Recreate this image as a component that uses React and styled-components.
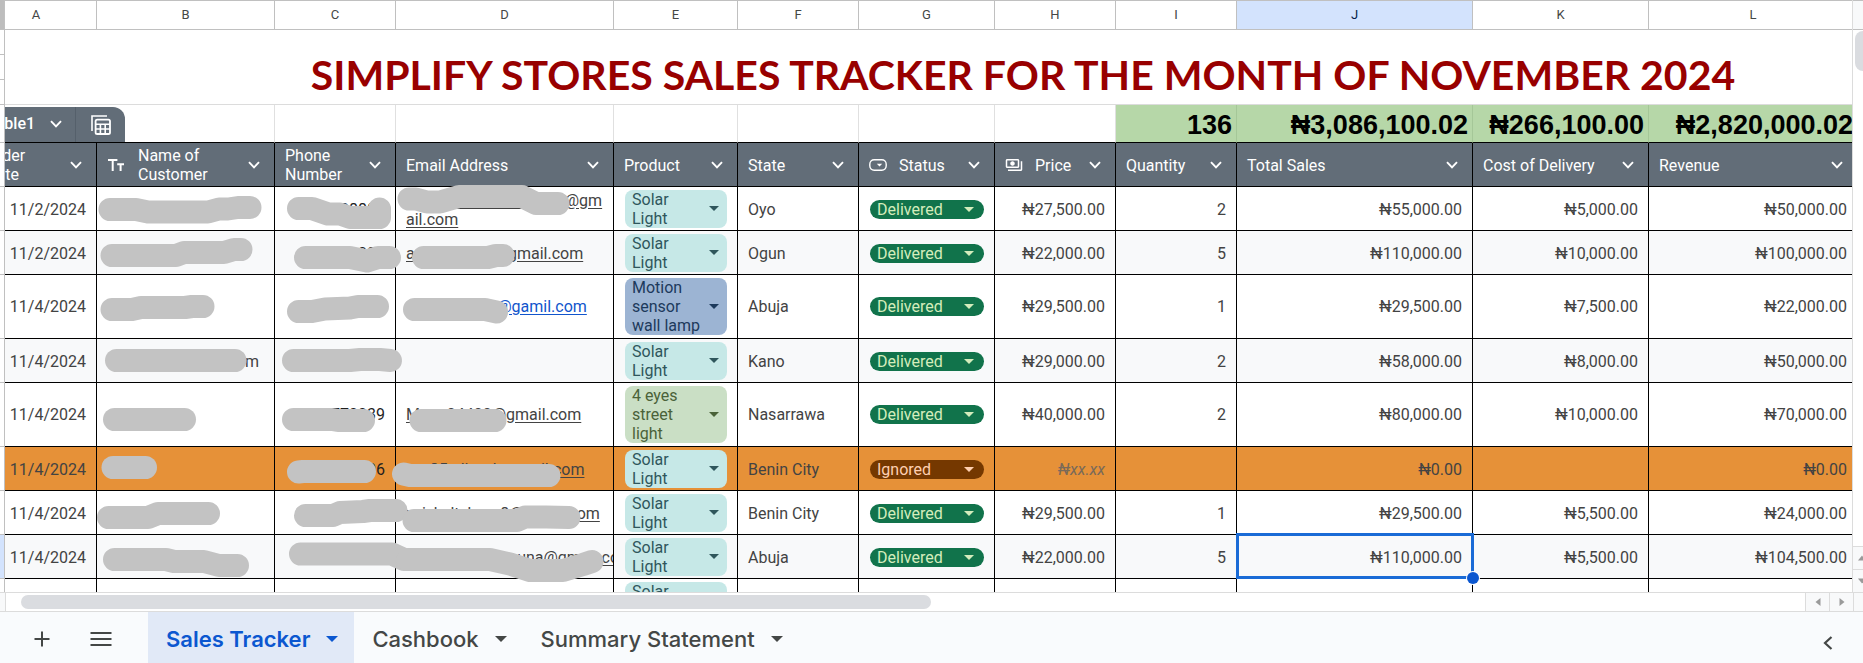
import React from 'react';
import styled, { createGlobalStyle, css } from 'styled-components';
import { MdOutlinePayments } from 'react-icons/md';

const GlobalStyle = createGlobalStyle`
  * {
    box-sizing: border-box;
  }

  body {
    margin: 0;
    background: #fff;
    color: #434343;
    font-family: Roboto, 'Liberation Sans', sans-serif;
    font-size: 16px;
    line-height: 19px;
  }

  button,
  select {
    margin: 0;
    padding: 0;
    border: 0;
    background: none;
    color: inherit;
    font: inherit;
    cursor: pointer;
  }
`;

const Page = styled.div`
  display: flex;
  flex-direction: column;
  height: 100vh;
  overflow: hidden;
`;

const Main = styled.main`
  position: relative;
  display: flex;
  flex: 1;
  min-height: 0;
  overflow: hidden;
`;

const RowStubs = styled.div`
  flex: none;
  width: 5px;
  border-right: 1px solid #c0c0c0;
`;

const Stub = styled.div`
  height: ${({ $height }) => $height}px;
  border-bottom: 1px solid #c0c0c0;
  background: ${({ $fill }) => $fill || '#fff'};
`;

const Sheet = styled.div`
  flex: 1;
  min-width: 0;
  overflow: hidden;
`;

/* scrolled 29px to the right, the last column runs on under the scroll bar */
const Table = styled.table`
  width: calc(100% + 35px);
  margin-left: -29px;
  border-collapse: separate;
  border-spacing: 0;
  table-layout: fixed;
`;

const Letter = styled.th`
  height: 30px;
  padding: 0 0 2px;
  border: solid #c0c0c0;
  border-width: 1px 1px 1px 0;
  background: ${({ $active }) => ($active ? '#d3e3fd' : '#fff')};
  color: ${({ $active }) => ($active ? '#041e49' : '#444746')};
  font-size: 13px;
  font-weight: 400;
`;

const TitleCell = styled.td`
  height: 75px;
  padding: 0 0 4px 212px;
  border-bottom: 1px solid #dcdcdc;
  color: #980000;
  font-family: Lato, 'Liberation Sans', sans-serif;
  font-size: 41px;
  font-weight: 700;
  line-height: 50px;
  text-align: center;
  vertical-align: bottom;
  white-space: nowrap;
`;

const TotalCell = styled.td`
  height: 38px;
  padding: ${({ $green }) => ($green ? '0 4px 2px 0' : '0')};
  border-right: 1px solid ${({ $green }) => ($green ? '#a5c798' : '#e0e0e0')};
  border-bottom: 1px solid #000;
  background: ${({ $green }) => ($green ? '#b6d7a8' : '#fff')};
  color: #000;
  font-family: 'Liberation Sans', Arial, sans-serif;
  font-size: 27px;
  font-weight: 700;
  line-height: 30px;
  text-align: right;
  vertical-align: bottom;
  white-space: nowrap;
`;

const TableTab = styled.div`
  display: flex;
  width: 149px;
  height: 35px;
  border-radius: 0 12px 0 0;
  background: #626d78;
  color: #fff;
  font-family: Roboto, sans-serif;
  font-size: 16px;
  font-weight: 500;
  line-height: 19px;
`;

const TableName = styled.button`
  display: flex;
  align-items: center;
  justify-content: space-between;
  width: 100px;
  padding: 0 13px 2px 11px;
  border-right: 1px solid #55606b;
`;

const TableCalc = styled.button`
  display: flex;
  flex: 1;
  align-items: center;
  justify-content: center;
`;

const HeadCell = styled.th`
  height: 44px;
  padding: 1px 14px 0 10px;
  border-right: 1px solid #000;
  border-bottom: 1px solid #000;
  background: #626d78;
  color: #fff;
  font-weight: 400;
  text-align: left;
`;

const HeadInner = styled.div`
  display: flex;
  align-items: center;
  gap: 12px;

  span {
    flex: 1;
  }

  svg {
    display: block;
    flex: none;
  }
`;

const Cell = styled.td`
  position: relative;
  padding: 2px 10px 0;
  border-right: 1px solid #000;
  border-bottom: 1px solid #000;
  text-align: ${({ $right }) => ($right ? 'right' : 'left')};
  white-space: nowrap;

  ${({ $ghost }) =>
    $ghost &&
    css`
      color: #7a6a58;
      font-style: italic;
    `}

  ${({ $selected }) =>
    $selected &&
    css`
      &::before {
        content: '';
        position: absolute;
        z-index: 1;
        inset: -2px -2px -1px -1px;
        border: 3px solid #1a6bd6;
      }

      &::after {
        content: '';
        position: absolute;
        z-index: 2;
        right: -7px;
        bottom: -6px;
        width: 12px;
        height: 12px;
        border-radius: 50%;
        background: #0b57d0;
        box-shadow: 0 0 0 1px #fff;
      }
    `}
`;

const ChipCell = styled(Cell)`
  padding-top: 0;
`;

const Row = styled.tr`
  height: ${({ $tall }) => ($tall ? 64 : 44)}px;
  background: ${({ $fill }) => $fill || '#fff'};

  ${({ $tall }) =>
    $tall &&
    css`
      ${Cell} {
        padding-top: 0;
      }
    `}
`;

const NameText = styled.span`
  display: block;
  padding-right: 5px;
  text-align: right;
`;

const Mail = styled.a`
  display: block;
  overflow: hidden;
  margin-right: -10px;
  padding-right: 10px;
  color: ${({ $blue }) => ($blue ? '#1155cc' : 'inherit')};
  text-decoration: underline;
  text-underline-offset: 2px;
  white-space: ${({ $wrap }) => ($wrap ? 'normal' : 'nowrap')};
  word-break: break-all;
`;

const Phone = styled.span`
  color: #1f1f1f;
`;

const tones = {
  solar: ['#c6e8e7', '#2f565c'],
  motion: ['#9cb4d3', '#1d3a5c'],
  street: ['#cadfc5', '#4a6239'],
  Delivered: ['#11734b', '#d4edbc'],
  Ignored: ['#753800', '#ffcfb0'],
};

const ProductChip = styled.button`
  display: flex;
  align-items: center;
  justify-content: space-between;
  width: 102px;
  margin-left: 1px;
  padding: 0 8px 0 7px;
  border-radius: 8px;
  background: ${({ $tone }) => tones[$tone][0]};
  color: ${({ $tone }) => tones[$tone][1]};
  text-align: left;
  white-space: normal;

  span {
    width: 72px;
  }
`;

const StatusChip = styled.label`
  display: grid;
  grid-template-columns: 1fr 20px;
  align-items: center;
  height: 19px;
  margin-left: 1px;
  border-radius: 10px;
  background: ${({ $tone }) => tones[$tone][0]};
  color: ${({ $tone }) => tones[$tone][1]};

  select {
    grid-area: 1 / 1 / 2 / 3;
    width: 100%;
    height: 19px;
    padding: 0 7px;
    appearance: none;
    outline-offset: 1px;
  }

  svg {
    grid-area: 1 / 2 / 2 / 3;
    pointer-events: none;
  }
`;

const Redactions = styled.svg`
  position: absolute;
  top: 0;
  left: 0;
  width: 620px;
  height: 600px;
  fill: none;
  stroke: #c3c3c3;
  stroke-width: 23;
  stroke-linecap: round;
  stroke-linejoin: round;
  pointer-events: none;
`;

const VerticalBar = styled.div`
  display: flex;
  flex: none;
  flex-direction: column;
  width: 11px;
  overflow: hidden;
  border-left: 1px solid #dcdcdc;
`;

const BarTop = styled.div`
  height: 30px;
  border: solid #c0c0c0;
  border-width: 1px 0;
  background: #f8f9fa;
`;

const VerticalThumb = styled.div`
  width: 16px;
  height: 40px;
  margin: 1px 0 auto 2px;
  border-radius: 8px;
  background: #dadce0;
`;

const ArrowButton = styled.button`
  display: flex;
  flex: none;
  align-items: center;
  justify-content: center;
  width: ${({ $wide }) => ($wide ? 24 : 18)}px;
  height: ${({ $wide }) => ($wide ? 18 : 23)}px;
  border: solid #dcdcdc;
  border-width: ${({ $wide }) => ($wide ? '0 0 0 1px' : '1px 0 0')};
  background: #f8f9fa;
`;

const HorizontalBar = styled.div`
  display: flex;
  flex: none;
  height: 20px;
  border: solid #dcdcdc;
  border-width: 1px 0;
`;

const BarCorner = styled.div`
  flex: none;
  width: ${({ $width }) => $width}px;
  border: solid #dcdcdc;
  border-width: ${({ $end }) => ($end ? '0 0 0 1px' : '0 1px 0 0')};
  background: #f8f9fa;
`;

const Track = styled.div`
  flex: 1;
  padding: 2px 0 2px 15px;
`;

const HorizontalThumb = styled.div`
  width: 51%;
  height: 14px;
  border-radius: 7px;
  background: #dadce0;
`;

const Footer = styled.footer`
  display: flex;
  flex: none;
  align-items: stretch;
  height: 51px;
  background: #f9fbfd;
  color: #444746;
`;

const FooterTools = styled.div`
  display: flex;
  align-items: center;
  gap: 35px;
  width: 148px;
  padding: 3px 0 0 30px;

  svg {
    display: block;
  }
`;

const SheetTab = styled.button`
  display: flex;
  align-items: center;
  gap: 16px;
  padding: 3px 16px 0 18px;
  background: ${({ $active }) => ($active ? '#e1e9f7' : 'transparent')};
  color: ${({ $active }) => ($active ? '#0b57d0' : '#444746')};
  font-family: Inter, sans-serif;
  font-size: 22px;
  font-weight: ${({ $active }) => ($active ? 600 : 500)};
  line-height: 24px;
`;

const PanelToggle = styled.button`
  display: flex;
  align-items: center;
  margin-left: auto;
  padding: 11px 30px 0 10px;
`;

const HeadButton = styled.button`
  display: flex;
  flex: none;
`;

const Chevron = () => (
  <svg width="12" height="8" viewBox="0 0 12 8" aria-hidden="true">
    <path d="M1 1.2 6 6.4 11 1.2" fill="none" stroke="currentColor" strokeWidth="1.9" />
  </svg>
);

const Caret = ({ width = 10 }) => (
  <svg width={width} height={width / 2} viewBox="0 0 10 5" aria-hidden="true">
    <path d="M0 0h10L5 5z" fill="currentColor" />
  </svg>
);

const Triangle = ({ turn }) => (
  <svg width="8" height="8" viewBox="0 0 8 8" aria-hidden="true">
    <path d="M0 6.5h8L4 1.5z" fill="#9a9a9a" transform={`rotate(${turn} 4 4)`} />
  </svg>
);

const TextIcon = () => (
  <svg width="19" height="13" viewBox="-1 0 19 13" aria-hidden="true">
    <path
      d="M0 1h9.4M4.7 1v11M9.2 5.2H16M12.6 5.2V12"
      fill="none"
      stroke="currentColor"
      strokeWidth="2"
    />
  </svg>
);

const StatusIcon = () => (
  <svg width="18" height="12" viewBox="0 0 18 12" aria-hidden="true">
    <rect x="0.8" y="0.8" width="16.4" height="10.4" rx="4.4" fill="none" stroke="currentColor" strokeWidth="1.4" />
    <path d="M7.8 4.8h5.4l-2.7 2.7z" fill="currentColor" />
  </svg>
);

const CalcIcon = () => (
  <svg width="20" height="20" viewBox="0 0 20 20" aria-hidden="true">
    <path d="M1 16V1h15" fill="none" stroke="currentColor" strokeWidth="1.6" />
    <rect x="4.6" y="4.6" width="14.4" height="14.4" rx="1.6" fill="none" stroke="currentColor" strokeWidth="1.8" />
    <path d="M5 9.2h14M5 14h14M9.4 9.2V19M14.2 9.2V19" fill="none" stroke="currentColor" strokeWidth="1.6" />
  </svg>
);

const letters = 'ABCDEFGHIJKL'.split('');

// the last column takes what is left
const widths = [121, 178, 121, 218, 124, 121, 136, 121, 121, 236, 176];

const headings = [
  { label: 'Order Date' },
  { label: 'Name of Customer', icon: <TextIcon /> },
  { label: 'Phone Number' },
  { label: 'Email Address' },
  { label: 'Product' },
  { label: 'State' },
  { label: 'Status', icon: <StatusIcon /> },
  { label: 'Price', icon: <MdOutlinePayments size={18} /> },
  { label: 'Quantity' },
  { label: 'Total Sales' },
  { label: 'Cost of Delivery' },
  { label: 'Revenue' },
];

const totals = ['136', '₦3,086,100.02', '₦266,100.00', '₦2,820,000.02'];

const products = {
  solar: 'Solar Light',
  motion: 'Motion sensor wall lamp',
  street: '4 eyes street light',
};

const rows = [
  { date: '11/2/2024', phone: '08880', mail: 'xxxxxxxxxxxxxxxxxxxx@gmail.com', wrap: true, product: 'solar', state: 'Oyo', price: '₦27,500.00', qty: 2, total: '₦55,000.00', cost: '₦5,000.00', revenue: '₦50,000.00' },
  { date: '11/2/2024', phone: '08010000', mail: 'axxxxxxxxxmxgmail.com', product: 'solar', state: 'Ogun', price: '₦22,000.00', qty: 5, total: '₦110,000.00', cost: '₦10,000.00', revenue: '₦100,000.00' },
  { date: '11/4/2024', mail: 'xxxxxxxxxixx@gamil.com', blue: true, product: 'motion', state: 'Abuja', price: '₦29,500.00', qty: 1, total: '₦29,500.00', cost: '₦7,500.00', revenue: '₦22,000.00' },
  { date: '11/4/2024', name: 'm', product: 'solar', state: 'Kano', price: '₦29,000.00', qty: 2, total: '₦58,000.00', cost: '₦8,000.00', revenue: '₦50,000.00' },
  { date: '11/4/2024', phone: '770039', mail: 'Mxxrr04400@gmail.com', product: 'street', state: 'Nasarrawa', price: '₦40,000.00', qty: 2, total: '₦80,000.00', cost: '₦10,000.00', revenue: '₦70,000.00' },
  { date: '11/4/2024', phone: '06', mail: 'xxx85xdixxshxgmail.com', product: 'solar', state: 'Benin City', status: 'Ignored', price: '₦xx.xx', total: '₦0.00', revenue: '₦0.00' },
  { date: '11/4/2024', mail: 'xxixhxltxhxxx8@xxxxn.com', product: 'solar', state: 'Benin City', price: '₦29,500.00', qty: 1, total: '₦29,500.00', cost: '₦5,500.00', revenue: '₦24,000.00' },
  { date: '11/4/2024', mail: 'xxxxxxxxxxxxxxuna@gmail.com', product: 'solar', state: 'Abuja', price: '₦22,000.00', qty: 5, total: '₦110,000.00', cost: '₦5,500.00', revenue: '₦104,500.00', selected: true },
  { product: 'solar' },
];

const strokes = [
  'M110 209.5H136L148 212H208L219 209H228L238 207.5H250',
  'M112 255.5H176L184 252.5H224L234 249.5H241',
  'M112 309.5H132L141 307.5H185L192 306.5H203',
  'M116.5 360.5H235',
  'M114.5 419.5H184.5',
  'M113 467.5H145.5',
  'M108.5 517.5H148L158 513.5H208.5',
  'M114.5 559.5H166L174 561.5H204L219 565.5H237.5',
  'M298.5 208.5H312L328 214H340L350 217.5H379.5V209',
  'M305.5 257.5H350L367 261L378 257.5H389.5',
  'M298.5 311.5H312L325 309L350 308L358 306.5H377.5',
  'M293.5 360.5H350L360 359.5H380L390.5 360.5',
  'M293.5 419.5H332L338 420.5H363.5',
  'M298.5 472L303 471.5H364.5',
  'M305.5 515.5H333L340 512.5L363 511.5L370 510.5H396',
  'M300.5 554H392L404 559.5',
  'M409 199H416L427 202H440L459 196.5H522L536 203.5H558',
  'M423.5 257.5H488L496 255.5H503',
  'M414.5 309.5H485L496.5 312',
  'M421 420.5H495',
  'M403.5 474L410 475.5H549',
  'M414 520.5H517L525 517H546L569 517.5',
  'M408 559.5H490L510 564L530 570.5H563L583 564.5L592 561.5',
];

const stubs = [25, 25, 25, 38, 44, 44, 44, 64, 44, 64, 44, 44];

const rowFill = (row, i) => {
  if (row.status === 'Ignored') return '#e69138';
  return i % 2 ? '#f8f9fa' : '#fff';
};

const App = () => (
  <Page>
    <GlobalStyle />
    <Main>
      <RowStubs>
        <Stub $height={30} $fill="#bdbdbd" />
        {stubs.map((height, i) => (
          <Stub key={i} $height={height} />
        ))}
        <Stub $height={44} $fill="#d3e3fd" />
      </RowStubs>

      <Sheet>
        <Table>
          <colgroup>
            {widths.map((width, i) => (
              <col key={i} style={{ width }} />
            ))}
            <col />
          </colgroup>
          <thead>
            <tr>
              {letters.map(letter => (
                <Letter key={letter} $active={letter === 'J'}>{letter}</Letter>
              ))}
            </tr>
          </thead>
          <tbody>
            <tr>
              <TitleCell colSpan={12}>SIMPLIFY STORES SALES TRACKER FOR THE MONTH OF NOVEMBER 2024</TitleCell>
            </tr>
            <tr>
              <TotalCell colSpan={2}>
                <TableTab>
                  <TableName type="button">Table1 <Chevron /></TableName>
                  <TableCalc type="button" aria-label="Table menu"><CalcIcon /></TableCalc>
                </TableTab>
              </TotalCell>
              {letters.slice(2, 8).map(letter => <TotalCell key={letter} />)}
              {totals.map(total => <TotalCell key={total} $green>{total}</TotalCell>)}
            </tr>
            <tr>
              {headings.map(({ label, icon }) => (
                <HeadCell key={label} scope="col">
                  <HeadInner>
                    {icon}
                    <span>{label}</span>
                    <HeadButton type="button" aria-label={`${label} menu`}><Chevron /></HeadButton>
                  </HeadInner>
                </HeadCell>
              ))}
            </tr>
            {rows.map((row, i) => (
              <Row key={i} $tall={row.product !== 'solar'} $fill={rowFill(row, i)}>
                <Cell $right>{row.date}</Cell>
                <Cell><NameText>{row.name}</NameText></Cell>
                <Cell $right><Phone>{row.phone}</Phone></Cell>
                <Cell>
                  {row.mail && <Mail href="#mail" $wrap={row.wrap} $blue={row.blue}>{row.mail}</Mail>}
                </Cell>
                <ChipCell>
                  <ProductChip type="button" aria-haspopup="listbox" $tone={row.product}>
                    <span>{products[row.product]}</span>
                    <Caret />
                  </ProductChip>
                </ChipCell>
                <Cell>{row.state}</Cell>
                <Cell>
                  <StatusChip $tone={row.status || 'Delivered'}>
                    <select aria-label="Status" defaultValue={row.status || 'Delivered'}>
                      <option>Delivered</option>
                      <option>Ignored</option>
                    </select>
                    <Caret />
                  </StatusChip>
                </Cell>
                <Cell $right $ghost={row.status === 'Ignored'}>{row.price}</Cell>
                <Cell $right>{row.qty}</Cell>
                <Cell $right $selected={row.selected}>{row.total}</Cell>
                <Cell $right>{row.cost}</Cell>
                <Cell $right>{row.revenue}</Cell>
              </Row>
            ))}
          </tbody>
        </Table>
      </Sheet>

      <VerticalBar>
        <BarTop />
        <VerticalThumb />
        <ArrowButton type="button" aria-label="Scroll up"><Triangle turn={0} /></ArrowButton>
        <ArrowButton type="button" aria-label="Scroll down"><Triangle turn={180} /></ArrowButton>
      </VerticalBar>

      <Redactions aria-hidden="true">
        {strokes.map(d => <path key={d} d={d} />)}
      </Redactions>
    </Main>

    <HorizontalBar>
      <BarCorner $width={6} />
      <Track>
        <HorizontalThumb />
      </Track>
      <ArrowButton type="button" $wide aria-label="Scroll left"><Triangle turn={-90} /></ArrowButton>
      <ArrowButton type="button" $wide aria-label="Scroll right"><Triangle turn={90} /></ArrowButton>
      <BarCorner $width={10} $end />
    </HorizontalBar>

    <Footer>
      <FooterTools>
        <button type="button" aria-label="Add sheet">
          <svg width="24" height="24" viewBox="0 0 24 24">
            <path d="M12 4.5v15M4.5 12h15" stroke="currentColor" strokeWidth="2" />
          </svg>
        </button>
        <button type="button" aria-label="All sheets">
          <svg width="24" height="24" viewBox="0 0 24 24">
            <path d="M1.5 6h21M1.5 12h21M1.5 18h21" stroke="currentColor" strokeWidth="2" />
          </svg>
        </button>
      </FooterTools>
      <SheetTab type="button" $active>Sales Tracker <Caret width={12} /></SheetTab>
      <SheetTab type="button">Cashbook <Caret width={12} /></SheetTab>
      <SheetTab type="button">Summary Statement <Caret width={12} /></SheetTab>
      <PanelToggle type="button" aria-label="Show side panel">
        <svg width="10" height="14" viewBox="0 0 10 14">
          <path d="M8.5 1 2 7l6.5 6" fill="none" stroke="currentColor" strokeWidth="2.2" />
        </svg>
      </PanelToggle>
    </Footer>
  </Page>
);

export default App;
